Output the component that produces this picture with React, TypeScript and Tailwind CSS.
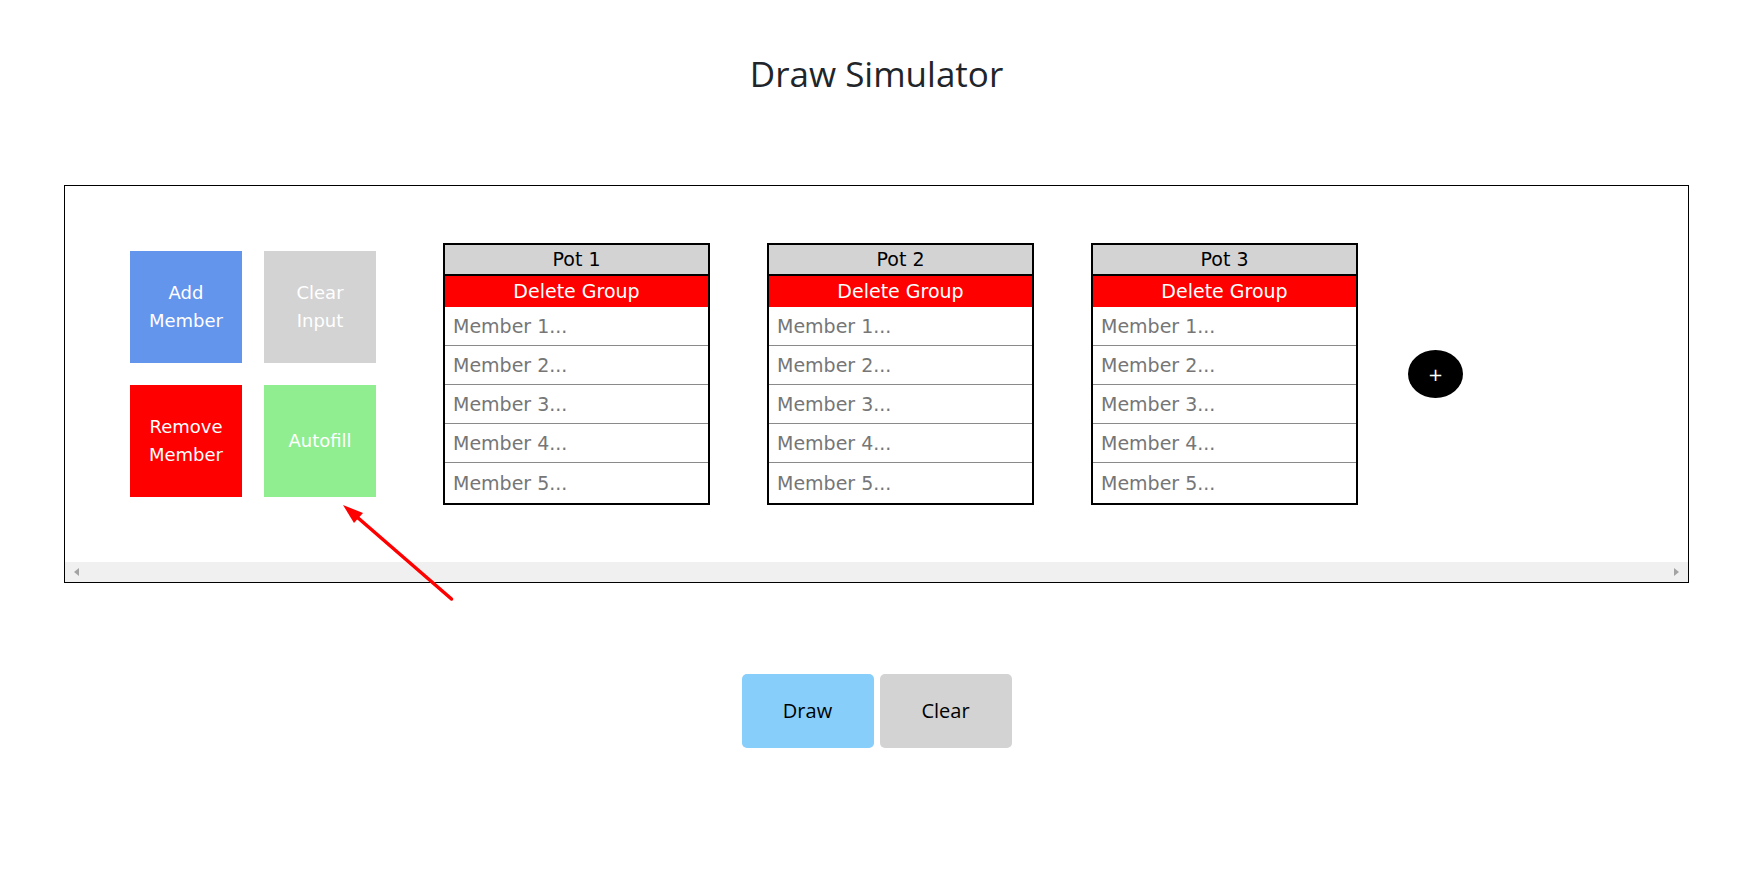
const pots = ['Pot 1', 'Pot 2', 'Pot 3']
const members = ['Member 1...', 'Member 2...', 'Member 3...', 'Member 4...', 'Member 5...']

const sans = 'font-["DejaVu_Sans",Verdana,sans-serif]'

function Pot({ name }: { name: string }) {
  return (
    <div className={`flex w-[267px] shrink-0 flex-col border-2 border-black text-[19px] ${sans}`}>
      <div className="flex h-[31px] items-center justify-center border-b-2 border-black bg-[#d3d3d3] text-black">
        {name}
      </div>
      <button className="flex h-[31px] items-center justify-center bg-[#ff0000] text-white">
        Delete Group
      </button>
      {members.map((m, i) => (
        <input
          key={m}
          placeholder={m}
          className={`h-[39px] w-full px-2 text-[19px] outline-none placeholder:text-[#767676] ${
            i < members.length - 1 ? 'border-b border-[#8a8a8a]' : 'h-[40px]'
          }`}
        />
      ))}
    </div>
  )
}

export default function App() {
  return (
    <div className="relative min-h-[880px] bg-white">
      <h1 className='pt-[50px] text-center font-["Open_Sans",sans-serif] text-[35px] leading-[48px] text-[#212529]'>
        Draw Simulator
      </h1>

      {/* Pots panel */}
      <div className="mx-[64px] mt-[87px] flex flex-col border border-black">
        <div className="flex h-[376px] items-center pl-[65px]">
          <div className={`grid shrink-0 grid-cols-2 gap-[22px] text-[18px] leading-[28px] text-white ${sans}`}>
            <button className="flex h-[112px] w-[112px] items-center justify-center bg-[#6495ed] text-center">
              Add
              <br />
              Member
            </button>
            <button className="flex h-[112px] w-[112px] items-center justify-center bg-[#d3d3d3] text-center">
              Clear
              <br />
              Input
            </button>
            <button className="flex h-[112px] w-[112px] items-center justify-center bg-[#ff0000] text-center">
              Remove
              <br />
              Member
            </button>
            <button className="flex h-[112px] w-[112px] items-center justify-center bg-[#90ee90] text-center">
              Autofill
            </button>
          </div>

          <div className="ml-[67px] flex items-center gap-[57px]">
            {pots.map((p) => (
              <Pot key={p} name={p} />
            ))}
          </div>

          <button className={`ml-[50px] flex h-[48px] w-[55px] shrink-0 items-center justify-center rounded-[50%] bg-black text-[18px] text-white ${sans}`}>
            +
          </button>
        </div>

        {/* Scrollbar */}
        <div className="flex h-[20px] items-center justify-between bg-[#f0f0f0] px-[9px]">
          <span className="h-0 w-0 border-y-[4px] border-r-[5px] border-y-transparent border-r-[#a3a3a3]" />
          <span className="h-0 w-0 border-y-[4px] border-l-[5px] border-y-transparent border-l-[#a3a3a3]" />
        </div>
      </div>

      <div className='mt-[91px] flex justify-center gap-[6px] font-["Open_Sans",sans-serif] text-[20px] text-black'>
        <button className="h-[74px] w-[132px] rounded-[5px] bg-[#87cefa]">Draw</button>
        <button className="h-[74px] w-[132px] rounded-[5px] bg-[#d3d3d3]">Clear</button>
      </div>

      {/* Annotation arrow */}
      <svg className="absolute left-[330px] top-[490px]" width="140" height="120" viewBox="0 0 140 120">
        <line x1="27" y1="27" x2="121.5" y2="109" stroke="#ff0000" strokeWidth="3.5" strokeLinecap="round" />
        <polygon points="13,15 33,23 24,33" fill="#ff0000" />
      </svg>
    </div>
  )
}
